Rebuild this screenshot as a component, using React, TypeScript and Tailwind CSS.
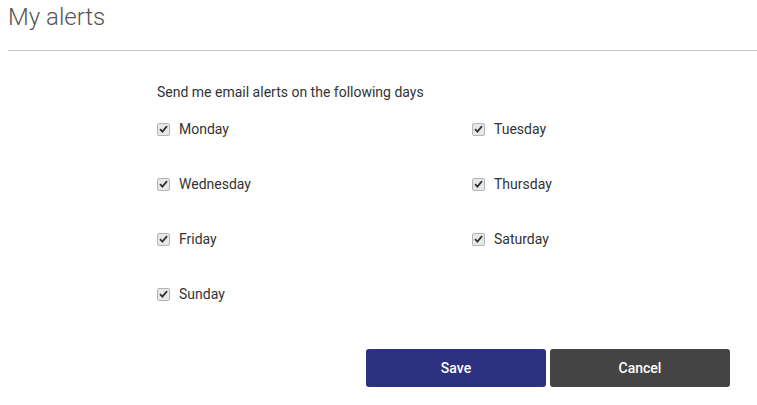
const days = [
  ["Monday", "Tuesday"],
  ["Wednesday", "Thursday"],
  ["Friday", "Saturday"],
  ["Sunday"],
];

function CheckBox() {
  return (
    <span className="flex h-[13px] w-[13px] items-center justify-center rounded-[2px] border border-[#b4b4b4] bg-[#e8e8e8]">
      <svg width="9" height="8" viewBox="0 0 9 8" fill="none">
        <path d="M1 4.2 L3.4 6.6 L8 1.2" stroke="#333" strokeWidth="1.8" />
      </svg>
    </span>
  );
}

function DayOption({ label }: { label: string }) {
  return (
    <label className="flex h-5 items-center gap-[9px] text-[14px] text-[#333]">
      <CheckBox />
      <span>{label}</span>
    </label>
  );
}

export default function App() {
  return (
    <div className="min-h-[405px] bg-white font-['Roboto',sans-serif]">
      <div className="ml-2 h-[51px] border-b border-[#c8c8c8] pt-[3px]">
        <h1 className="text-[24px] font-light leading-7 text-[#555]">My alerts</h1>
      </div>
      <div className="pl-[157px]">
        <p className="mt-[31px] text-[14px] leading-5 text-[#333]">
          Send me email alerts on the following days
        </p>
        <div className="mt-[17px] grid grid-cols-[315px_1fr] gap-y-[35px]">
          {days.flat().map((d) => (
            <DayOption key={d} label={d} />
          ))}
        </div>
      </div>
      <div className="mt-[45px] flex gap-1 pl-[366px]">
        <button className="h-[38px] w-[180px] rounded-[3px] bg-[#2e3182] text-[14px] font-medium text-white">
          Save
        </button>
        <button className="h-[38px] w-[180px] rounded-[3px] bg-[#444444] text-[14px] font-medium text-white">
          Cancel
        </button>
      </div>
    </div>
  );
}
